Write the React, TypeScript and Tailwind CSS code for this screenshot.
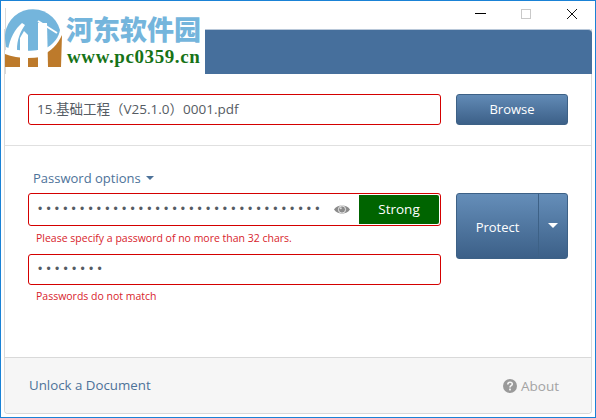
import React from "react";

const sans = "font-['Open_Sans','Noto_Sans_CJK_SC',sans-serif]";

function Logo() {
  return (
    <div className="absolute left-[4px] top-[7px] w-[200px] h-[66px] bg-white border-l border-[#d9d9d9]">
      <svg className="absolute -left-px top-0" width="60" height="62" viewBox="5 8 60 62">
        <path d="M5 52 C15 56 30 57 41 55 C51 52 58 44 62 35 L61 67 L5 67 Z" fill="#bd7a2b" />
        <path d="M5 39 A28 28 0 0 1 60 30 C59 37 54 43 48 47 C38 52 18 52 6 47 Z" fill="#74b5dc" />
        <path d="M8 50 C10 38 15 29 22 23 L25 25 C20 32 17 40 17 50 Z" fill="#ffffff" />
        <path d="M20 67 V38 L24 31 L28 35 V67 Z" fill="#ffffff" />
        <path d="M38 67 V23 L47 23 L48 67 Z" fill="#ffffff" />
        <path d="M38 21 L57 33" stroke="#ffffff" strokeWidth="2" fill="none" />
        <path d="M5 50 C18 55 30 56 41 53 L41 57 C28 59 15 58 5 54 Z" fill="#ffffff" />
      </svg>
      <div className="absolute left-[60px] top-[6px] text-[27px] leading-[30px] font-black text-[#74b5dc] whitespace-nowrap font-['Noto_Sans_CJK_SC',sans-serif]">
        河东软件园
      </div>
      <div className="absolute left-[61px] top-[37px] text-[19px] leading-[24px] font-bold tracking-[0.6px] text-[#177317] whitespace-nowrap font-['Liberation_Serif',serif]">
        www.pc0359.cn
      </div>
    </div>
  );
}

export default function App() {
  return (
    <div className={`relative w-[596px] h-[418px] bg-white border border-[#1a82d6] ${sans} overflow-hidden flex flex-col`}>
      <div className="h-[28px] flex justify-end items-center shrink-0 pb-[3px]">
        <div className="w-[11px] h-px bg-black mr-[35px]" />
        <div className="w-[10px] h-[10px] border border-[#c9c9c9] mr-[35px]" />
        <svg width="12" height="12" viewBox="0 0 12 12" className="mr-[17px]">
          <path d="M1 1 L11 11 M11 1 L1 11" stroke="#111" strokeWidth="1" />
        </svg>
      </div>
      <div className="ml-[3px] mr-[3px] mb-[3px] flex-1 flex flex-col border-x border-b border-[#d9d9d9] rounded-b-[4px] min-h-0">
        <div className="h-[45px] bg-[#466f9c] rounded-t-[4px] -mr-px shrink-0 border-t border-[#b9c8d9]" />
        <div className="h-[72px] border-b border-[#e0e0e0] flex items-start pl-[23px] pr-[23px] pt-[20px] gap-[15px] shrink-0">
          <div className="w-[413px] h-[31px] border border-[#d40000] rounded-[3px] flex items-center pl-[8px] text-[13.5px] text-[#555b63]">
            15.基础工程（V25.1.0）0001.pdf
          </div>
          <button className="w-[112px] h-[31px] pt-px rounded-[3px] border border-[#3d6186] bg-gradient-to-b from-[#628bb6] to-[#3c6088] text-white text-[13px]">
            Browse
          </button>
        </div>
        <div className="flex-1 flex items-start pl-[23px] pr-[23px] pt-[22px] gap-[15px] min-h-0">
          <div className="w-[413px] flex flex-col">
            <div className="h-[25px] flex items-center pl-[5px] pb-[4px] text-[13px] text-[#4d7299] gap-[5px]">
              Password options
              <span className="w-0 h-0 mb-[2px] border-x-[4px] border-x-transparent border-t-[4px] border-t-[#4d7299]" />
            </div>
            <div className="h-[33px] border border-[#d40000] rounded-[3px] flex items-center pl-[9px] pr-px">
              <div className="w-[290px] flex items-center">
                <span className="mb-[2px] text-[12px] leading-none tracking-[4.2px] text-[#555b63] font-['Liberation_Sans',sans-serif] whitespace-nowrap">
                  {"•".repeat(34)}
                </span>
              </div>
              <svg width="16" height="11" viewBox="0 0 16 11" className="ml-[6px]">
                <path d="M0 5.5 C3 0 13 0 16 5.5 C13 11 3 11 0 5.5 Z" fill="#8a8a8a" />
                <circle cx="8" cy="5.5" r="3.6" fill="#8a8a8a" stroke="#fff" strokeWidth="0.8" />
                <circle cx="6.8" cy="4.3" r="1" fill="#d8d8d8" />
              </svg>
              <div className="ml-[9px] w-[80px] h-[29px] bg-[#006400] text-white text-[13.5px] font-medium flex items-center justify-center rounded-r-[2px]">
                Strong
              </div>
            </div>
            <div className="h-[28px] flex items-center pl-[8px] pb-[3px] text-[10.5px] text-[#d8242c]">
              Please specify a password of no more than 32 chars.
            </div>
            <div className="h-[31px] border border-[#d40000] rounded-[3px] flex items-center pl-[9px]">
              <span className="mb-[2px] text-[12px] leading-none tracking-[4.3px] text-[#555b63] font-['Liberation_Sans',sans-serif] whitespace-nowrap">
                {"•".repeat(8)}
              </span>
            </div>
            <div className="h-[24px] flex items-center pl-[8px] text-[10.5px] text-[#d8242c]">
              Passwords do not match
            </div>
          </div>
          <div className="w-[112px] h-[66px] mt-[25px] rounded-[3px] border border-[#3d6186] bg-gradient-to-b from-[#658eb9] to-[#3c6088] flex text-white">
            <button className="w-[82px] pt-[3px] text-[13px] border-r border-[#3d6186]">Protect</button>
            <button className="flex-1 flex items-center justify-center pb-px">
              <span className="w-0 h-0 border-x-[5px] border-x-transparent border-t-[5px] border-t-white" />
            </button>
          </div>
        </div>
        <div className="h-[56px] shrink-0 bg-[#f6f6f6] border-t border-[#d9d9d9] rounded-b-[4px] flex items-center justify-between pl-[24px] pr-[32px] pt-px text-[13.5px]">
          <span className="text-[#4d7299] text-[13.3px]">Unlock a Document</span>
          <span className="flex items-center gap-[4px] text-[#a3a3a3]">
            <svg width="14" height="14" viewBox="0 0 14 14">
              <circle cx="7" cy="7" r="7" fill="#9a9a9a" />
              <path d="M4.8 5.4 C4.8 2.6 9.3 2.6 9.3 5.1 C9.3 6.8 7 6.6 7 8.4" stroke="#f6f6f6" strokeWidth="1.6" fill="none" />
              <rect x="6.1" y="9.6" width="1.8" height="1.8" fill="#f6f6f6" />
            </svg>
            About
          </span>
        </div>
      </div>
      <Logo />
    </div>
  );
}
